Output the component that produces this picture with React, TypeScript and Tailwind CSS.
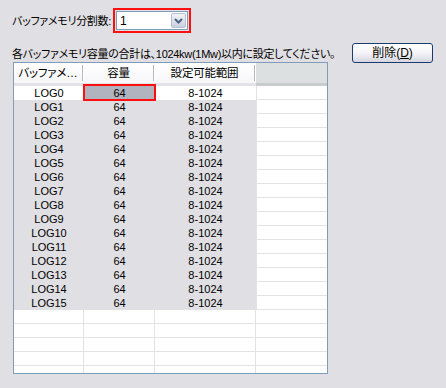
import React from 'react';

const jp = "font-['Liberation_Sans','Noto_Sans_CJK_JP',sans-serif] [font-feature-settings:'palt']";

const rows = Array.from({ length: 16 }, (_, i) => `LOG${i}`);

const HeaderCell = ({ label }: { label: string }) => (
  <div className="flex items-center bg-gradient-to-b from-white to-[#f7f7fa] border-b-[3px] border-[#e2e2e8]">
    <span className="flex-1 text-center text-[11.5px] leading-[14px] whitespace-nowrap tracking-[-0.2px]">{label}</span>
    <span className="h-[16px] w-[2px] border-l border-[#b9b9c3] border-r border-r-white" />
  </div>
);

const App = () => {
  return (
    <div className={`w-[446px] h-[388px] bg-[#e0dfe3] text-black overflow-hidden ${jp}`}>
      {/* 分割数 */}
      <div className="flex items-center h-[25px] mt-[8px] pl-[12px]">
        <span className="w-[101px] text-[11px] leading-[14px] whitespace-nowrap tracking-[-0.3px]">バッファメモリ分割数:</span>
        <div className="w-[78px] h-[25px] border-2 border-[#ff1010] p-px">
          <div className="h-full flex items-center bg-white border border-[#7f9db9] pl-[3px] pr-px py-px">
            <span className="flex-1 text-[12px] leading-none">1</span>
            <div className="w-[15px] h-full flex items-center justify-center rounded-[2px] border border-[#b7bfd0] bg-gradient-to-b from-[#f4f5fa] to-[#c9cfdd]">
              <svg width="9" height="6" viewBox="0 0 9 6">
                <path d="M1 1 L4.5 4.5 L8 1" fill="none" stroke="#4d6185" strokeWidth="2" />
              </svg>
            </div>
          </div>
        </div>
      </div>

      {/* 説明と削除ボタン */}
      <div className="flex items-start h-[19px] mt-[10px] pl-[12px] pr-[13px]">
        <span className="flex-1 text-[11px] leading-[14px] whitespace-nowrap tracking-[-0.3px] pt-[4px]">
          各バッファメモリ容量の合計は、1024kw(1Mw)以内に設定してください。
        </span>
        <button className="w-[81px] h-[20px] rounded-[3px] border border-[#1c3a6e] bg-gradient-to-b from-white via-[#f4f4f8] to-[#d6d6e0] text-[12px] leading-[14px] whitespace-nowrap">
          削除(<span className="underline">D</span>)
        </button>
      </div>

      {/* テーブル */}
      <div className="ml-[13px] w-[315px] h-[312px] border border-[#7f9db9] bg-white overflow-hidden">
        <div className="grid grid-cols-[70px_71px_101px_71px] h-[23px]">
          <HeaderCell label="バッファメ…" />
          <HeaderCell label="容量" />
          <HeaderCell label="設定可能範囲" />
          <div className="bg-[#dde0e1] border-b-[3px] border-[#c9cccd]" />
        </div>

        {rows.map((name, i) => {
          const first = i === 0;
          const cell = first ? 'bg-white' : 'bg-[#e0dfe3]';
          return (
            <div key={name} className="grid grid-cols-[70px_71px_101px_71px] h-[14px] text-[11px] leading-[14px]">
              <div className={`${cell} text-center`}>{name}</div>
              <div className={`${first ? 'bg-[#b1b3be] relative' : cell} text-center`}>
                64
                {first && (
                  <div className="absolute -left-[1px] -right-[1px] -top-[2px] -bottom-[1px] border-2 border-[#ff1010]" />
                )}
              </div>
              <div className={`${cell} text-center`}>8-1024</div>
              <div className="bg-white border-l border-b border-[#e3e3e6]" />
            </div>
          );
        })}

        {Array.from({ length: 5 }, (_, i) => (
          <div key={i} className="grid grid-cols-[70px_71px_101px_71px] h-[14px]">
            <div className="border-r border-b border-[#e3e3e6]" />
            <div className="border-r border-b border-[#e3e3e6]" />
            <div className="border-r border-b border-[#e3e3e6]" />
            <div className="border-b border-[#e3e3e6]" />
          </div>
        ))}
      </div>
    </div>
  );
};

export default App;
